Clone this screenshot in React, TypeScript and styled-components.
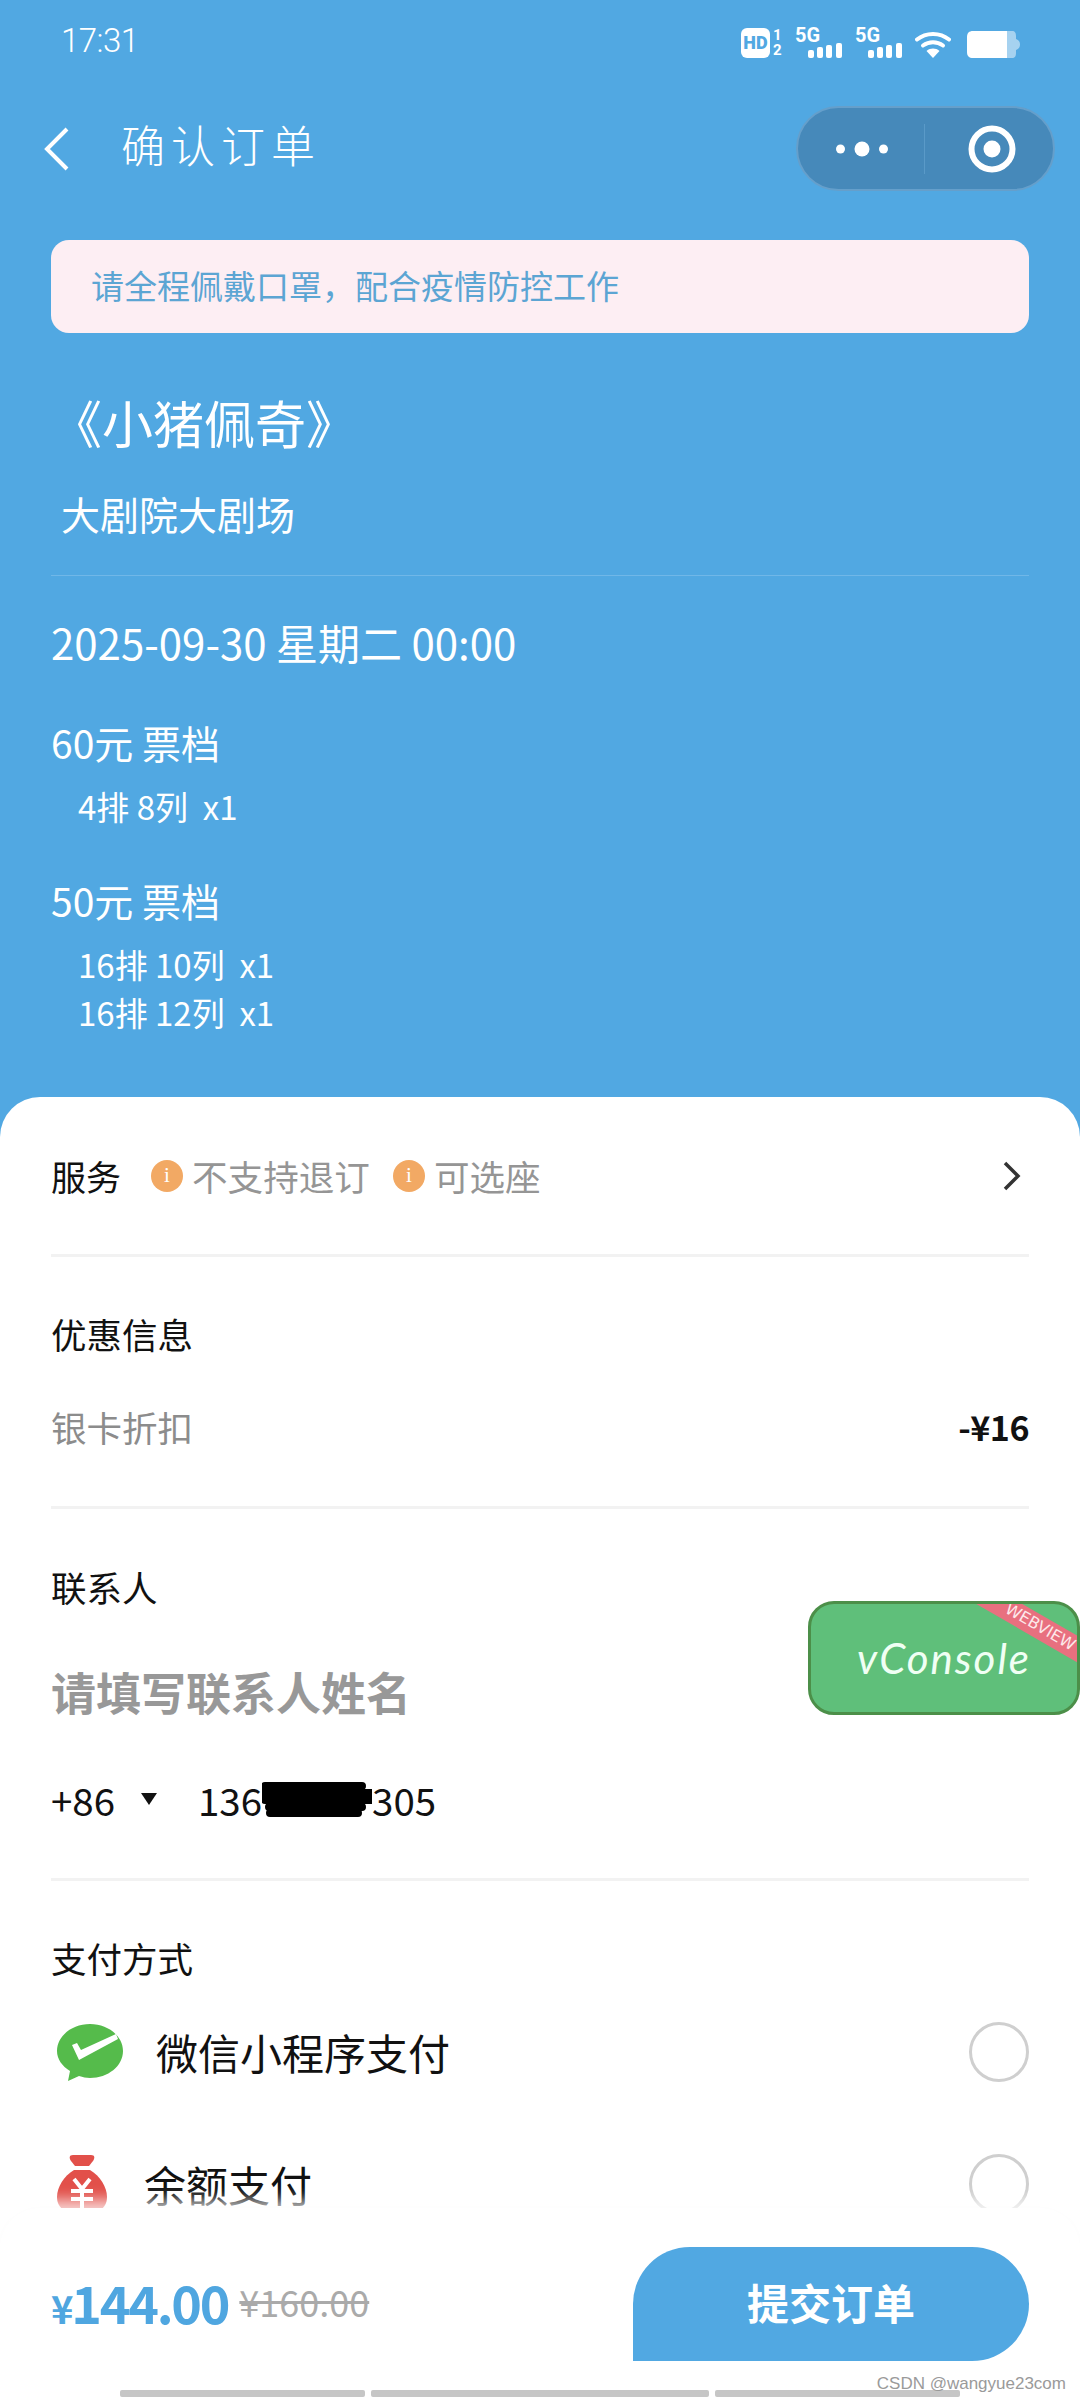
import * as React from 'react';
import styled, { createGlobalStyle } from 'styled-components';

const BLUE = '#51a8e2';
const CJK = `"Noto Sans CJK SC", "Noto Sans", sans-serif`;

const GlobalStyle = createGlobalStyle`
    html, body {
        margin: 0;
        padding: 0;
        background: #fff;
        font-family: ${CJK};
    }
`;

const Page = styled.div`
    position: relative;
    width: 1080px;
    height: 2400px;
    overflow: hidden;
    background: #fff;
`;

const Header = styled.header`
    display: flex;
    flex-direction: column;
    height: 1137px;
    background: ${BLUE};
    color: #fff;
`;

const StatusBar = styled.div`
    display: flex;
    align-items: center;
    justify-content: space-between;
    height: 80px;
    padding: 0 60px 0 61px;
`;

const Clock = styled.span`
    font-family: Roboto, sans-serif;
    font-weight: 300;
    font-size: 33px;
    letter-spacing: -0.5px;
`;

const StatusIcons = styled.div`
    display: flex;
    align-items: flex-end;
    gap: 12px;
    height: 32px;
    margin-top: 4px;
`;

const SimBadge = styled.div`
    display: flex;
    gap: 3px;
    height: 30px;
`;

const HdBox = styled.span`
    width: 29px;
    height: 30px;
    border-radius: 6px;
    background: #fff;
    color: ${BLUE};
    font-family: Roboto, sans-serif;
    font-size: 18px;
    font-weight: 900;
    line-height: 30px;
    text-align: center;
`;

const SimSlots = styled.span`
    display: flex;
    flex-direction: column;
    width: 10px;
    font-family: Roboto, sans-serif;
    font-size: 15px;
    font-weight: 700;
    line-height: 15px;
`;

const SignalGroup = styled.div`
    display: flex;
    flex-direction: column;
    width: 48px;
    height: 31px;
`;

const SignalLabel = styled.span`
    height: 16px;
    font-family: Roboto, sans-serif;
    font-size: 20px;
    font-weight: 700;
    line-height: 16px;
`;

const SignalBars = styled.svg`
    flex: none;
`;

const WifiIcon = styled.svg`
    margin-right: 4px;
`;

const NavBar = styled.div`
    display: flex;
    align-items: center;
    height: 85px;
    margin-top: 26px;
    padding: 0 25px 0 44px;
`;

const PageTitle = styled.h1`
    flex: 1;
    margin: 0 0 9px 51px;
    font-size: 44px;
    font-weight: 300;
    letter-spacing: 6px;
`;

const Capsule = styled.div`
    display: grid;
    grid-template-columns: 127px 1fr;
    align-items: center;
    box-sizing: border-box;
    width: 259px;
    height: 85px;
    border: 2px solid #659fcb;
    border-radius: 43px;
    background: #4689ba;
`;

const CapsuleCell = styled.div<{ divided?: boolean }>`
    display: flex;
    align-items: center;
    justify-content: center;
    box-sizing: border-box;
    height: 50px;
    padding: ${({ divided }) => divided ? '0 0 0 2px' : '0 0 0 6px'};
    border-right: ${({ divided }) => divided ? '1px solid #5a9ac8' : 'none'};
`;

const Notice = styled.div`
    display: flex;
    align-items: center;
    box-sizing: border-box;
    height: 93px;
    margin: 49px 51px 0;
    padding: 0 40px 3px;
    border-radius: 18px;
    background: #fdeef3;
    color: #5ca5d3;
    font-size: 33px;
`;

const Show = styled.div`
    display: flex;
    flex-direction: column;
    padding: 0 51px;
`;

const ShowTitle = styled.div`
    height: 60px;
    margin-top: 59px;
    font-size: 51px;
    line-height: 60px;
`;

const Venue = styled.div`
    margin-top: 36px;
    padding-left: 10px;
    font-size: 39px;
    line-height: 50px;
`;

const ShowDivider = styled.div`
    height: 1px;
    margin-top: 37px;
    background: #70b7e8;
`;

const ShowDate = styled.div`
    margin-top: 41px;
    font-size: 42px;
    line-height: 50px;
`;

const TicketTier = styled.div<{ gap: number }>`
    margin-top: ${({ gap }) => gap}px;
    font-size: 39px;
    line-height: 50px;
`;

const Seats = styled.div`
    display: flex;
    flex-direction: column;
    margin-top: 15px;
    padding-left: 27px;
    font-size: 33px;
    line-height: 48px;
    white-space: pre;
`;

const Sheet = styled.main`
    position: relative;
    margin-top: -40px;
    padding: 0 51px;
    border-radius: 40px 40px 0 0;
    background: #fff;
    color: #111;
`;

const ServiceRow = styled.div`
    display: flex;
    align-items: center;
    height: 157px;
    border-bottom: 3px solid #f2f2f2;
    font-size: 35px;
`;

const ServiceName = styled.span`
    margin-right: 30px;
`;

const ServiceTag = styled.div`
    display: flex;
    align-items: center;
    gap: 9px;
    margin-right: 23px;
    color: #959595;
    font-size: 35.6px;
`;

const InfoDot = styled.span`
    display: flex;
    align-items: center;
    justify-content: center;
    width: 32px;
    height: 32px;
    border-radius: 50%;
    background: #f2a964;
    color: #fff;
    font-family: "Liberation Serif", serif;
    font-size: 21px;
`;

const Chevron = styled.svg`
    margin-left: auto;
    margin-right: 8px;
`;

const Section = styled.section<{ top: number; bottom?: number; line?: boolean }>`
    padding-top: ${({ top }) => top}px;
    padding-bottom: ${({ bottom }) => bottom ?? 0}px;
    border-bottom: ${({ line }) => line ? '3px solid #f2f2f2' : 'none'};
`;

const SectionTitle = styled.div`
    font-size: 35.5px;
    line-height: 50px;
`;

const DiscountRow = styled.div`
    display: flex;
    align-items: center;
    justify-content: space-between;
    margin-top: 43px;
    color: #8c8c8c;
    font-size: 35.5px;
    line-height: 50px;
`;

const DiscountValue = styled.span`
    color: #111;
    font-size: 34px;
    font-weight: 700;
    letter-spacing: -0.5px;
`;

const NameField = styled.div`
    margin-top: 50px;
    color: #989898;
    font-size: 45px;
    font-weight: 700;
    line-height: 60px;
`;

const PhoneRow = styled.div`
    display: flex;
    align-items: center;
    margin-top: 52px;
    font-size: 38.5px;
    line-height: 50px;
`;

const PhoneCode = styled.span`
    width: 90px;
`;

const CodeArrow = styled.span`
    width: 0;
    height: 0;
    margin-right: 41px;
    border-top: 12px solid #111;
    border-left: 8px solid transparent;
    border-right: 8px solid transparent;
`;

const PayRow = styled.div<{ gap: number; textGap: number }>`
    display: flex;
    align-items: center;
    gap: ${({ textGap }) => textGap}px;
    height: 60px;
    margin-top: ${({ gap }) => gap}px;
    font-size: 42px;
`;

const PayLabel = styled.span`
    margin-bottom: 2px;
`;

const PayIcon = styled.svg`
    flex: none;
    margin-left: 6px;
`;

const Radio = styled.span`
    box-sizing: border-box;
    width: 60px;
    height: 60px;
    margin-left: auto;
    border: 3px solid #cfcfcf;
    border-radius: 50%;
`;

const VConsole = styled.div`
    position: absolute;
    top: 1601px;
    left: 808px;
    box-sizing: border-box;
    display: flex;
    align-items: center;
    justify-content: center;
    width: 272px;
    height: 114px;
    overflow: hidden;
    border: 3px solid #4c8f49;
    border-radius: 26px;
    background: #5fbf7a;
    color: #f0fff4;
    font-family: Lato, sans-serif;
    font-style: italic;
    font-size: 42px;
    letter-spacing: 2px;
`;

const Ribbon = styled.span`
    position: absolute;
    top: 12px;
    right: -38px;
    width: 150px;
    height: 23px;
    background: #e8707f;
    color: #fde8ea;
    font-family: "DejaVu Sans", sans-serif;
    font-style: normal;
    font-size: 16px;
    letter-spacing: 0;
    line-height: 22px;
    text-align: center;
    transform: rotate(30deg);
`;

const BottomBar = styled.footer`
    position: absolute;
    left: 0;
    right: 0;
    bottom: 0;
    box-sizing: border-box;
    display: flex;
    flex-direction: column;
    height: 192px;
    padding-top: 39px;
    border-radius: 40px 40px 0 0;
    background: #fff;
    box-shadow: 0 -8px 14px rgba(255, 255, 255, 0.75), 0 -1px 4px rgba(0, 0, 0, 0.02);
`;

const SubmitRow = styled.div`
    display: flex;
    align-items: center;
    padding: 0 51px;
`;

const Price = styled.span`
    margin-bottom: 6px;
    color: #4fa6e0;
    font-size: 52px;
    font-weight: 700;
    letter-spacing: -2.2px;
`;

const PriceSign = styled.span`
    font-size: 38px;
`;

const OldPrice = styled.span`
    margin-bottom: 6px;
    margin-left: 11px;
    color: #aaa;
    font-size: 36px;
    text-decoration: line-through;
`;

const SubmitButton = styled.button`
    width: 396px;
    height: 114px;
    margin-left: auto;
    padding: 0 0 5px;
    border: none;
    border-radius: 57px 57px 57px 0;
    background: ${BLUE};
    color: #fff;
    font-family: ${CJK};
    font-size: 42px;
    font-weight: 700;
`;

const GestureBar = styled.div`
    display: grid;
    grid-template-columns: 245px 338px 245px;
    gap: 6px;
    height: 7px;
    margin-top: 29px;
    padding: 0 120px;
`;

const GestureSegment = styled.span`
    background: #c6c6c6;
    border-radius: 2px;
`;

const Watermark = styled.span`
    position: absolute;
    right: 14px;
    bottom: 6px;
    color: #9a9a9a;
    font-family: "Liberation Sans", sans-serif;
    font-size: 17px;
`;

const Sim: React.FC = () => (
    <SimBadge>
        <HdBox>HD</HdBox>
        <SimSlots>
            <span>1</span>
            <span>2</span>
        </SimSlots>
    </SimBadge>
);

const Signal: React.FC = () => (
    <SignalGroup>
        <SignalLabel>5G</SignalLabel>
        <SignalBars width="48" height="15" viewBox="0 0 48 15">
            <rect x="13" y="7" width="6" height="8" rx="2" fill="#fff" />
            <rect x="22" y="4" width="6" height="11" rx="2" fill="#fff" />
            <rect x="31" y="2" width="6" height="13" rx="2" fill="#fff" />
            <rect x="41" y="0" width="6" height="15" rx="2" fill="#fff" />
        </SignalBars>
    </SignalGroup>
);

const Wifi: React.FC = () => (
    <WifiIcon width="36" height="27" viewBox="0 0 36 27">
        <path d="M2 8.5C11 1 25 1 34 8.5" fill="none" stroke="#fff" strokeWidth="4" strokeLinecap="round" />
        <path d="M8 14.5C14 10 22 10 28 14.5" fill="none" stroke="#fff" strokeWidth="4" strokeLinecap="round" />
        <path d="M11.5 20C15.5 16.8 20.5 16.8 24.5 20L18 27Z" fill="#fff" />
    </WifiIcon>
);

const Battery: React.FC = () => (
    <svg width="53" height="27" viewBox="0 0 53 27">
        <path d="M40 0H45C48 0 49 2 49 5V8C52 9 53 11 53 13.5C53 16 52 18 49 19V22C49 25 48 27 45 27H40Z" fill="#a6d2f0" />
        <path d="M6 0H40V27H6C2 27 0 25 0 21V6C0 2 2 0 6 0Z" fill="#fff" />
    </svg>
);

const BackArrow: React.FC = () => (
    <svg width="26" height="46" viewBox="0 0 26 46">
        <path d="M23 3L3 23L23 43" fill="none" stroke="#fff" strokeWidth="4" />
    </svg>
);

const MoreDots: React.FC = () => (
    <svg width="52" height="18" viewBox="0 0 52 18">
        <circle cx="4.5" cy="9" r="4.5" fill="#fff" />
        <circle cx="26" cy="9" r="7.5" fill="#fff" />
        <circle cx="47.5" cy="9" r="4.5" fill="#fff" />
    </svg>
);

const CloseTarget: React.FC = () => (
    <svg width="48" height="48" viewBox="0 0 48 48">
        <circle cx="24" cy="24" r="20.5" fill="none" stroke="#fff" strokeWidth="6" />
        <circle cx="24" cy="24" r="8.5" fill="#fff" />
    </svg>
);

const WechatPay: React.FC = () => (
    <PayIcon width="66" height="57" viewBox="0 0 66 57">
        <path d="M33 0C51 0 66 12 66 27C66 42 51 54 33 54C29 54 26 53 22 52L11 57L13 47C5 42 0 35 0 27C0 12 15 0 33 0Z" fill="#55bb4b" />
        <path d="M15 21L22 36L61 15L59 10L24 26L20 19Z" fill="#fff" />
    </PayIcon>
);

const BalancePay: React.FC = () => (
    <PayIcon width="50" height="60" viewBox="0 0 50 60">
        <path d="M16 1H34C38 1 38 4 36 7L32 12H18L14 7C12 4 12 1 16 1Z" fill="#e2504a" />
        <path d="M17 16H33C43 22 50 33 50 43C50 55 40 60 25 60C10 60 0 55 0 43C0 33 7 22 17 16Z" fill="#e2504a" />
        <path d="M17 25L25 35L33 25M14 37H36M14 45H36M25 35V58" fill="none" stroke="#fff" strokeWidth="4" />
    </PayIcon>
);

const Redaction: React.FC = () => (
    <svg width="110" height="36" viewBox="0 0 110 36">
        <path d="M3 5H100M0 12H110M3 19H112M7 26H100M8 32H96" stroke="#000" strokeWidth="8" strokeLinecap="round" />
    </svg>
);

export default function App() {
    return (
        <Page>
            <GlobalStyle />
            <Header>
                <StatusBar>
                    <Clock>17:31</Clock>
                    <StatusIcons>
                        <Sim />
                        <Signal />
                        <Signal />
                        <Wifi />
                        <Battery />
                    </StatusIcons>
                </StatusBar>
                <NavBar>
                    <BackArrow />
                    <PageTitle>确认订单</PageTitle>
                    <Capsule>
                        <CapsuleCell divided><MoreDots /></CapsuleCell>
                        <CapsuleCell><CloseTarget /></CapsuleCell>
                    </Capsule>
                </NavBar>
                <Notice>请全程佩戴口罩，配合疫情防控工作</Notice>
                <Show>
                    <ShowTitle>《小猪佩奇》</ShowTitle>
                    <Venue>大剧院大剧场</Venue>
                    <ShowDivider />
                    <ShowDate>2025-09-30 星期二 00:00</ShowDate>
                    <TicketTier gap={50}>60元 票档</TicketTier>
                    <Seats>
                        <span>4排 8列  x1</span>
                    </Seats>
                    <TicketTier gap={45}>50元 票档</TicketTier>
                    <Seats>
                        <span>16排 10列  x1</span>
                        <span>16排 12列  x1</span>
                    </Seats>
                </Show>
            </Header>
            <Sheet>
                <ServiceRow>
                    <ServiceName>服务</ServiceName>
                    <ServiceTag><InfoDot>i</InfoDot>不支持退订</ServiceTag>
                    <ServiceTag><InfoDot>i</InfoDot>可选座</ServiceTag>
                    <Chevron width="18" height="30" viewBox="0 0 18 30">
                        <path d="M2 2L15 15L2 28" fill="none" stroke="#333" strokeWidth="3.5" />
                    </Chevron>
                </ServiceRow>
                <Section top={52} bottom={54} line>
                    <SectionTitle>优惠信息</SectionTitle>
                    <DiscountRow>
                        <span>银卡折扣</span>
                        <DiscountValue>-¥16</DiscountValue>
                    </DiscountRow>
                </Section>
                <Section top={53} bottom={54} line>
                    <SectionTitle>联系人</SectionTitle>
                    <NameField>请填写联系人姓名</NameField>
                    <PhoneRow>
                        <PhoneCode>+86</PhoneCode>
                        <CodeArrow />
                        <span>136</span>
                        <Redaction />
                        <span>305</span>
                    </PhoneRow>
                </Section>
                <Section top={52}>
                    <SectionTitle>支付方式</SectionTitle>
                    <PayRow gap={39} textGap={33}>
                        <WechatPay />
                        <PayLabel>微信小程序支付</PayLabel>
                        <Radio />
                    </PayRow>
                    <PayRow gap={72} textGap={37}>
                        <BalancePay />
                        <PayLabel>余额支付</PayLabel>
                        <Radio />
                    </PayRow>
                </Section>
            </Sheet>
            <VConsole>
                vConsole
                <Ribbon>WEBVIEW</Ribbon>
            </VConsole>
            <BottomBar>
                <SubmitRow>
                    <Price><PriceSign>¥</PriceSign>144.00</Price>
                    <OldPrice>¥160.00</OldPrice>
                    <SubmitButton>提交订单</SubmitButton>
                </SubmitRow>
                <GestureBar>
                    <GestureSegment />
                    <GestureSegment />
                    <GestureSegment />
                </GestureBar>
            </BottomBar>
            <Watermark>CSDN @wangyue23com</Watermark>
        </Page>
    );
}
